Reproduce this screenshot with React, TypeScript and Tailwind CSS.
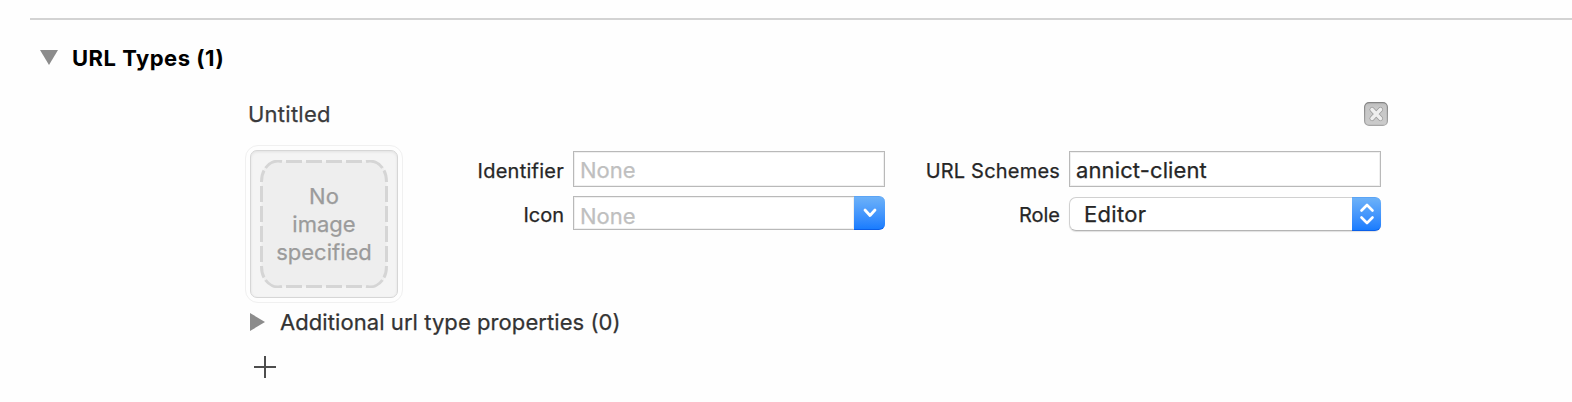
import React from "react";

type FieldProps = { label: string; labelClass: string; children: React.ReactNode };

function Field({ label, labelClass, children }: FieldProps) {
  return (
    <div className="flex items-start justify-end gap-[9px]">
      <span className={`whitespace-nowrap text-[20px] leading-[34px] text-[#262626] ${labelClass}`}>{label}</span>
      {children}
    </div>
  );
}

function ImageWell() {
  return (
    <div className="h-[158px] w-[158px] rounded-[13px] border border-[#f0f0f0] p-1">
      <div className="relative flex h-[148px] w-[148px] items-center justify-center rounded-[7px] border border-[#d6d6d6] bg-[#f4f4f4] shadow-[inset_0_1px_3px_rgba(0,0,0,0.08)]">
        <svg className="absolute top-[9px] left-[9px]" width="128" height="128" viewBox="0 0 128 128" fill="none">
          <rect x="1.5" y="1.5" width="125" height="125" rx="16" fill="#eeeeee" />
          <g stroke="#d5d5d5" strokeWidth="3">
            <path d="M26 1.5H102M26 126.5H102M1.5 26V102M126.5 26V102" strokeDasharray="16 4" />
            <path d="M5.5 8A16 16 0 0 1 22 1.5M106 1.5A16 16 0 0 1 122.5 8M122.5 120A16 16 0 0 1 106 126.5M22 126.5A16 16 0 0 1 5.5 120M1.5 22Q1.5 15 4 10.5M126.5 22Q126.5 15 124 10.5M126.5 106Q126.5 113 124 117.5M1.5 106Q1.5 113 4 117.5" />
          </g>
        </svg>
        <div className="relative text-center text-[22px] leading-[28px] text-[#9b9b9b]">
          <div>No</div>
          <div>image</div>
          <div>specified</div>
        </div>
      </div>
    </div>
  );
}

export default function App() {
  return (
    <main className="h-[402px] w-[1572px] overflow-hidden bg-[#fefefe] pt-[18px] font-['Inter',sans-serif] font-normal [-webkit-text-stroke:0.25px_currentColor]">
      <div className="ml-[30px] h-[2px] bg-[#d3d3d3]" />
      <header className="mt-[22px] ml-10 flex h-8 items-center">
        <svg width="18" height="15" viewBox="0 0 18 15" className="-mt-px">
          <path d="M0 0H18L9 15Z" fill="#8c8c8c" />
        </svg>
        <h2 className="ml-[14px] text-[22px] leading-8 font-bold tracking-[0.5px] text-black [-webkit-text-stroke:0]">URL Types (1)</h2>
      </header>

      <section className="ml-[245px] w-[1143px]">
        <div className="mt-6 flex h-8 items-center justify-between pl-[3px]">
          <span className="text-[22px] leading-8 tracking-[0.25px] text-[#3a3a3c]">Untitled</span>
          <svg width="24" height="24" viewBox="0 0 24 24" fill="none">
            <defs>
              <linearGradient id="close" x1="0" y1="0" x2="0" y2="1">
                <stop offset="0" stopColor="#bcbcbc" />
                <stop offset="0.2" stopColor="#c7c7c7" />
                <stop offset="1" stopColor="#cbcbcb" />
              </linearGradient>
              <linearGradient id="rim" x1="0" y1="0" x2="0" y2="1">
                <stop offset="0" stopColor="#848484" />
                <stop offset="1" stopColor="#a6a6a6" />
              </linearGradient>
            </defs>
            <rect x="0.6" y="0.6" width="22.8" height="22.8" rx="4.5" fill="url(#close)" stroke="url(#rim)" strokeWidth="1.2" />
            <path d="M8 7.5L16.5 16.5M16.5 7.5L8 16.5" stroke="#999999" strokeWidth="5" strokeLinecap="round" />
            <path d="M8 7.5L16.5 16.5M16.5 7.5L8 16.5" stroke="#eeeeee" strokeWidth="3.6" strokeLinecap="round" />
          </svg>
        </div>

        <div className="mt-[15px] flex">
          <ImageWell />
          <div className="mt-[6px] flex w-[482px] flex-col">
            <Field label="Identifier" labelClass="pt-[3px] -mb-px tracking-[0.25px]">
              <div className="h-9 w-[312px] border border-[#b9b9b9] bg-white pl-[6px] text-[22px] leading-[36px] text-[#bfbfbf] shadow-[inset_0_0_0_1px_#f0f0f0]">None</div>
            </Field>
            <div className="mt-[9px]">
              <Field label="Icon" labelClass="pt-[2px]">
                <div className="flex h-[34px] w-[312px]">
                  <div className="h-[34px] w-[281px] border border-r-0 border-[#b9b9b9] bg-white pl-[6px] text-[22px] leading-[38px] text-[#bfbfbf] shadow-[inset_0_0_0_1px_#f0f0f0]">None</div>
                  <div className="flex h-[34px] w-[31px] items-center justify-center rounded-r-[6px] border-y border-t-[#5ba4f5] border-b-[#0b5fe8] bg-linear-to-b from-[#6cb1f8] to-[#187cfe]">
                    <svg width="16" height="10" viewBox="0 0 16 10" fill="none">
                      <path d="M3 2L8 7.5L13 2" stroke="white" strokeWidth="2.8" strokeLinecap="round" strokeLinejoin="round" />
                    </svg>
                  </div>
                </div>
              </Field>
            </div>
          </div>
          <div className="mt-[6px] flex w-[496px] flex-col">
            <Field label="URL Schemes" labelClass="pt-[3px] -mb-px tracking-[0.2px]">
              <div className="h-9 w-[312px] border border-[#b9b9b9] bg-white pl-[6px] text-[22px] leading-[36px] tracking-[0.12px] text-[#262626] shadow-[inset_0_0_0_1px_#f0f0f0]">annict-client</div>
            </Field>
            <div className="mt-[10px]">
              <Field label="Role" labelClass="pt-px">
                <div className="flex h-[34px] w-[312px] rounded-[7px] shadow-[0_1px_1px_rgba(0,0,0,0.12)]">
                  <div className="h-[34px] w-[283px] rounded-l-[7px] border border-r-0 border-[#d0d0d0] border-b-[#b4b4b4] bg-white pl-[14px] text-[22px] leading-[32px] tracking-[0.3px] text-[#262626]">Editor</div>
                  <div className="flex h-[34px] w-[29px] items-center justify-center rounded-r-[6px] border-y border-t-[#5ba4f5] border-b-[#0b5fe8] bg-linear-to-b from-[#6cb1f8] to-[#187cfe]">
                    <svg width="16" height="22" viewBox="0 0 16 22" fill="none">
                      <path d="M2.5 7.5L8 2L13.5 7.5M2.5 14.5L8 20L13.5 14.5" stroke="white" strokeWidth="2.6" strokeLinecap="round" strokeLinejoin="round" />
                    </svg>
                  </div>
                </div>
              </Field>
            </div>
          </div>
        </div>

        <div className="mt-[3px] flex h-8 items-center pl-[5px]">
          <svg width="15" height="18" viewBox="0 0 15 18">
            <path d="M0 0L15 9L0 18Z" fill="#8c8c8c" />
          </svg>
          <span className="ml-[15px] text-[22px] leading-8 tracking-[0.07px] text-[#333333]">Additional url type properties (0)</span>
        </div>
        <svg className="mt-[18px] ml-[9px]" width="22" height="22" viewBox="0 0 22 22">
          <path d="M11 0V22M0 11H22" stroke="#4d4d4d" strokeWidth="2" />
        </svg>
      </section>
    </main>
  );
}
